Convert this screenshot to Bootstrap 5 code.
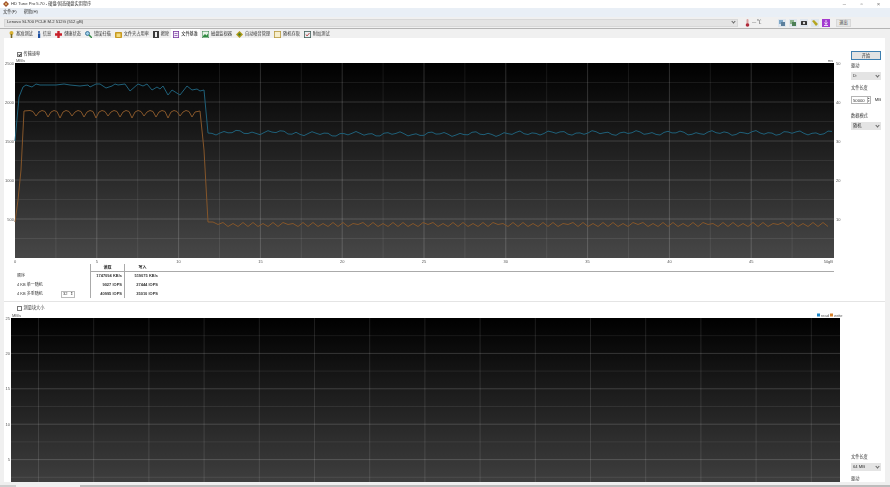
<!DOCTYPE html>
<html lang="zh-CN">
<head>
  <meta charset="UTF-8">
  <meta name="viewport" content="width=device-width, initial-scale=1">
  <title>HD Tune Pro 5.70</title>
  <link href="https://cdn.jsdelivr.net/npm/bootstrap@5.3.3/dist/css/bootstrap.min.css" rel="stylesheet">
  <style>
    html, body { height: 487px; overflow: hidden; }
    body { background: #f0f0f0; color: #333; font: 4.2px/1 "Liberation Sans", "Noto Sans CJK SC", sans-serif; filter: blur(.3px); }
    svg { display: block; }
    svg text { font: 4px "Liberation Sans", "Noto Sans CJK SC", sans-serif; fill: #555; }
    .title-bar { height: 8px; background: #fff; padding: 0 3px; gap: 2px; }
    .win-btn { width: 17px; text-align: center; color: #777; font-size: 6px; }
    .menu-bar { height: 9px; background: #e9eff6; padding-left: 3px; gap: 7px; }
    .drive-bar { height: 12px; background: #f0f0f0; border-bottom: 1.5px solid #b4b4b4; padding: 0 39px 0 4px; }
    .drive-box { width: 734px; height: 8px; background: #e4e4e4; border: 1px solid #d8d8d8; padding: 0 2px; }
    .drop-arrow { width: 3px; height: 3px; border-right: .6px solid #666; border-bottom: .6px solid #666; transform: rotate(45deg); margin-top: -2px; }
    .temp-read { margin-left: 7px; gap: 2px; width: 26px; }
    .tool-group { gap: 3px; }
    .tool-btn { width: 8px; height: 8px; background: #dfe6ee; display: flex; align-items: center; justify-content: center; }
    .exit-btn { width: 15px; height: 8px; background: #e6e6e6; border: 1px solid #d8d8d8; text-align: center; line-height: 6px; margin-left: 3px; }
    .tab-bar.nav { height: 9px; padding-left: 7px; gap: 0; border: 0; background: #f0f0f0; flex-wrap: nowrap; }
    .tab-bar .nav-link { padding: 1px 2px 0; gap: 2px; height: 9px; border: 0; border-radius: 0; color: #333; font-size: 4.2px; display: flex; align-items: center; background: none; }
    .tab-bar .nav-link.active { background: #fff; }
    .work-panel { height: 444px; width: 881px; margin-left: 4px; background: #fff; }
    .upper-pane { height: 264px; border-bottom: 1.5px solid #e4e4e4; }
    .lower-pane { height: 180px; }
    .chart-col { width: 842px; flex: none; }
    .side-col { width: 39px; flex: none; padding-left: 5px; padding-right: 4px; }
    .tick-row { height: 7px; padding-left: 13px; gap: 2px; }
    .tick-box { width: 4.5px; height: 4.5px; border: .6px solid #777; background: #fff; position: relative; }
    .tick-box.is-on::after { content: ""; position: absolute; left: .9px; top: .2px; width: 1.7px; height: 2.8px; border-right: .6px solid #333; border-bottom: .6px solid #333; transform: rotate(40deg); }
    .start-btn { width: 30px; height: 9px; background: #e3e3e3; border: 1px solid #3f7fb0; text-align: center; line-height: 7px; margin-top: 13px; }
    .field-label { height: 5px; margin-top: 4px; margin-bottom: 3px; }
    .field-box { width: 30px; height: 8px; background: #e4e4e4; padding: 0 2px; }
    .size-box { width: 18px; height: 8px; background: #fff; border: .6px solid #b5b5b5; padding-left: 1px; line-height: 7px; }
    .spin-box { width: 3px; height: 8px; border: .6px solid #b5b5b5; border-left: 0; font-size: 2.5px; line-height: 3.4px; text-align: center; }
    .result-grid { height: 35px; margin-left: 11px; width: 819px; display: grid; grid-template-columns: 75px 34px 36px 1fr; grid-template-rows: 8px 7px 11px 8px; font-weight: 700; font-size: 4px; }
    .result-grid > div { display: flex; align-items: center; }
    .result-head { border-bottom: 1.2px solid #aaa; }
    .bar-left { border-left: 1.2px solid #aaa; }
    .cell-num { justify-content: flex-end; padding-right: 2px; }
    .cell-name { font-weight: 400; padding-left: 2px; justify-content: space-between; padding-right: 15px; }
    .thread-box { width: 14px; height: 7px; border: .6px solid #bbb; display: flex; align-items: center; justify-content: space-between; padding: 0 1px; }
    .bottom-strip { height: 5px; background: #efefef; padding-top: 3px; }
    .strip-seg { height: 2px; }
    .strip-a { width: 16px; background: #cfcfcf; }
    .strip-b { width: 64px; background: #efefef; }
    .strip-c { flex-grow: 1; background: #bcbcbc; }
  </style>
</head>
<body>
  <div class="d-flex align-items-center title-bar">
    <svg width="6" height="6" viewBox="0 0 6 6"><path d="M3 0 6 3 3 6 0 3z" fill="#a0522d"/><circle cx="3" cy="3" r="1" fill="#e8c070"/></svg>
    <span>HD Tune Pro 5.70 - 硬盘/固态硬盘实用程序</span>
    <div class="ms-auto d-flex">
      <span class="win-btn">–</span><span class="win-btn">▫</span><span class="win-btn">×</span>
    </div>
  </div>
  <div class="d-flex align-items-center menu-bar"><span>文件(F)</span><span>帮助(H)</span></div>
  <div class="d-flex align-items-center drive-bar">
    <div class="d-flex align-items-center justify-content-between drive-box">
      <span>Lenovo SL700 PCI-E M.2 512G (512 gB)</span><span class="drop-arrow"></span>
    </div>
    <div class="d-flex align-items-center temp-read">
      <svg width="5" height="8" viewBox="0 0 5 8"><rect x="1.5" width="2" height="6" rx="1" fill="#d9a0a0"/><circle cx="2.5" cy="6" r="1.8" fill="#b02a3a"/></svg>
      <span>— ℃</span>
    </div>
    <div class="d-flex ms-auto tool-group align-items-center">
      <span class="tool-btn"><svg width="6" height="6" viewBox="0 0 6 6"><rect width="4" height="4" fill="#7fa8c8"/><rect x="2" y="2" width="4" height="4" fill="#5c7f9c"/></svg></span>
      <span class="tool-btn"><svg width="6" height="6" viewBox="0 0 6 6"><rect width="4" height="4" fill="#8fb58f"/><rect x="2" y="2" width="4" height="4" fill="#4d7f55"/></svg></span>
      <span class="tool-btn"><svg width="6" height="5" viewBox="0 0 6 5"><rect y="1" width="6" height="4" rx=".6" fill="#333"/><circle cx="3" cy="3" r="1.2" fill="#ddd"/></svg></span>
      <span class="tool-btn"><svg width="6" height="6" viewBox="0 0 6 6"><path d="M0 1 2 0 6 4 4 6z" fill="#b5a520"/></svg></span>
      <span class="tool-btn"><svg width="8" height="8" viewBox="0 0 8 8"><rect width="8" height="8" fill="#a23ad0"/><path d="M4 1v4M2.5 3.5 4 5.5 5.5 3.5M2 6.5h4" stroke="#fff" stroke-width=".8" fill="none"/></svg></span>
      <span class="exit-btn">退出</span>
    </div>
  </div>
  <ul class="nav nav-tabs tab-bar">
    <li class="nav-item"><a class="nav-link" href="#"><svg width="5" height="7" viewBox="0 0 5 7"><circle cx="2.5" cy="2" r="2" fill="#d8b030"/><rect x="1.7" y="3" width="1.6" height="4" fill="#7a6a20"/></svg>基准测试</a></li>
    <li class="nav-item"><a class="nav-link" href="#"><svg width="4" height="7" viewBox="0 0 4 7"><circle cx="2" cy="1" r="1" fill="#1c4fa0"/><rect x="1" y="2.4" width="2.2" height="4.6" fill="#1c4fa0"/></svg>信息</a></li>
    <li class="nav-item"><a class="nav-link" href="#"><svg width="7" height="7" viewBox="0 0 7 7"><path d="M2.3 0h2.4v2.3H7v2.4H4.700V7H2.300V4.700H0V2.300h2.300z" fill="#c8202a"/></svg>健康状态</a></li>
    <li class="nav-item"><a class="nav-link" href="#"><svg width="7" height="7" viewBox="0 0 7 7"><circle cx="2.500" cy="2.500" r="2" fill="#9fd0e8" stroke="#24608a" stroke-width=".8"/><path d="M4 4 7 7" stroke="#2e8a40" stroke-width="1.400"/></svg>错误扫描</a></li>
    <li class="nav-item"><a class="nav-link" href="#"><svg width="7" height="7" viewBox="0 0 7 7"><rect y="1" width="7" height="6" rx=".8" fill="#c89a20"/><rect x="1.500" y="2.500" width="4" height="3.500" fill="#f3dc80"/></svg>文件夹占用率</a></li>
    <li class="nav-item"><a class="nav-link" href="#"><svg width="6" height="7" viewBox="0 0 6 7"><rect width="6" height="7" fill="#3a3a3a"/><rect x="2" y="1" width="2" height="5" fill="#eee"/></svg>擦除</a></li>
    <li class="nav-item"><a class="nav-link active" href="#"><svg width="6" height="7" viewBox="0 0 6 7"><rect x=".4" y=".4" width="5.200" height="6.200" fill="#f5f0fa" stroke="#7a3aa0" stroke-width=".8"/><path d="M1.500 2.500h3M1.500 4.500h3" stroke="#7a3aa0" stroke-width=".7"/></svg>文件基准</a></li>
    <li class="nav-item"><a class="nav-link" href="#"><svg width="7" height="7" viewBox="0 0 7 7"><rect width="7" height="7" fill="#e6f2e6" stroke="#2e7a40"/><path d="M1 5 3 3 4.500 4.500 6 2.500V6H1z" fill="#2e8a40"/></svg>磁盘监视器</a></li>
    <li class="nav-item"><a class="nav-link" href="#"><svg width="7" height="7" viewBox="0 0 7 7"><path d="M3.500 0 7 3.500 3.500 7 0 3.500z" fill="#b09a18"/><circle cx="3.500" cy="3.500" r="1.200" fill="#3f7a30"/></svg>自动噪音管理</a></li>
    <li class="nav-item"><a class="nav-link" href="#"><svg width="7" height="7" viewBox="0 0 7 7"><rect x=".4" y=".4" width="6.200" height="6.200" fill="#f7eecb" stroke="#b89a40" stroke-width=".8"/></svg>随机存取</a></li>
    <li class="nav-item"><a class="nav-link" href="#"><svg width="7" height="7" viewBox="0 0 7 7"><rect x=".4" y=".4" width="6.200" height="6.200" fill="#e8eef0" stroke="#44605a" stroke-width=".8"/><path d="M2 3.500 3 5 5.500 2" stroke="#b02a2a" stroke-width=".8" fill="none"/></svg>附加测试</a></li>
  </ul>

  <div class="work-panel">
    <div class="d-flex upper-pane">
      <div class="chart-col">
        <div class="d-flex align-items-center tick-row" style="margin-top:13px"><span class="tick-box is-on"></span><span>传输速率</span></div>
        <svg id="speedChart" width="842" height="206" viewBox="4 58 842 206"></svg>
        <div class="result-grid">
          <div></div><div class="bar-left justify-content-center result-head">读取</div><div class="bar-left justify-content-center result-head">写入</div><div class="result-head"></div>
          <div class="cell-name">顺序</div><div class="bar-left cell-num">1747094 KB/s</div><div class="bar-left cell-num">519075 KB/s</div><div></div>
          <div class="cell-name">4 KB 单一随机</div><div class="bar-left cell-num">9027 IOPS</div><div class="bar-left cell-num">27444 IOPS</div><div></div>
          <div class="cell-name"><span>4 KB 多重随机</span><span class="thread-box"><span>32</span><span>⇕</span></span></div><div class="bar-left cell-num">40995 IOPS</div><div class="bar-left cell-num">35010 IOPS</div><div></div>
        </div>
      </div>
      <div class="side-col d-flex flex-column">
        <div class="start-btn">开始</div>
        <div class="field-label">驱动</div>
        <div class="d-flex align-items-center justify-content-between field-box"><span>D:</span><span class="drop-arrow"></span></div>
        <div class="field-label" style="margin-top:6px;margin-bottom:5px">文件长度</div>
        <div class="d-flex align-items-center">
          <span class="size-box">50000</span><span class="spin-box">▴<br>▾</span><span class="ms-1 text-nowrap">MB</span>
        </div>
        <div class="field-label" style="margin-top:10px">数据模式</div>
        <div class="d-flex align-items-center justify-content-between field-box"><span>随机</span><span class="drop-arrow"></span></div>
      </div>
    </div>
    <div class="d-flex lower-pane">
      <div class="chart-col">
        <div class="d-flex align-items-center tick-row" style="margin-top:3px"><span class="tick-box"></span><span>测量块大小</span></div>
        <svg id="blockChart" width="842" height="170" viewBox="4 312 842 170"></svg>
      </div>
      <div class="side-col d-flex flex-column justify-content-end">
        <div class="field-label">文件长度</div>
        <div class="d-flex align-items-center justify-content-between field-box"><span>64 MB</span><span class="drop-arrow"></span></div>
        <div class="field-label mb-0" style="margin-top:6px">驱动</div>
      </div>
    </div>
  </div>
  <div class="bottom-strip d-flex"><div class="strip-seg strip-a"></div><div class="strip-seg strip-b"></div><div class="strip-seg strip-c"></div></div>

  <script>
    // both svgs use window coordinates through their viewBox
    const line = (x1, y1, x2, y2, color) => `<line x1="${x1}" y1="${y1}" x2="${x2}" y2="${y2}" stroke="${color}"/>`;
    const label = (x, y, text, anchor = 'end') => `<text x="${x}" y="${y}" text-anchor="${anchor}">${text}</text>`;
    const poly = (pts, color) => `<polyline points="${pts.map(p => p.join(',')).join(' ')}" fill="none" stroke="${color}" stroke-width="1"/>`;
    const MAJOR = 'rgba(255,255,255,.17)';
    const MINOR = 'rgba(255,255,255,.08)';

    function drawSpeed() {
      const L = 15, R = 834, T = 63, B = 258;
      let s = `<defs><linearGradient id="g1" x1="0" y1="0" x2="0" y2="1"><stop offset="0" stop-color="#000"/><stop offset="1" stop-color="#474747"/></linearGradient></defs>`;
      s += `<rect x="${L}" y="${T}" width="${R - L}" height="${B - T}" fill="url(#g1)"/>`;
      for (let i = 1; i < 20; i++) {
        const x = L + i * 40.9;
        s += line(x, T, x, B, i % 2 ? MINOR : MAJOR);
      }
      for (let i = 1; i < 10; i++) {
        const y = T + i * 19.5;
        s += line(L, y, R, y, i % 2 ? MINOR : MAJOR);
      }
      const blue = [[15,141],[19,97],[23,87],[26,85],[29,86],[32,87],[36,84],[40,85],[48,85],[56,85],[64,84],[70,85],[80,86],[88,85],[90,87],[96,84],[100,84],[106,88],[112,86],[115,84],[118,85],[125,84],[130,91],[138,84],[143,86],[147,84],[152,90],[157,87],[160,89],[163,86],[168,95],[172,90],[180,95],[187,86],[192,90],[197,89],[200,91],[204,90],[208,133]];
      for (let x = 212, i = 0; x <= 832; x += 4, i++) {
        const drift = x < 300 ? 132.5 : x < 520 ? 134 : 133;
        blue.push([x, +(drift + 1.4 * Math.sin(i * 1.7) + 1.1 * Math.sin(i * 0.63 + 1)).toFixed(1)]);
      }
      const orange = [[15,222],[18,200],[21,170],[24,111]];
      // rounded tops with narrow troughs
      for (let x = 30, i = 0; x <= 190; x += 12, i++) {
        orange.push([x, 110.5], [x + 3, 111.5], [x + 6, 116 + (i % 3)], [x + 9, 112]);
      }
      orange.push([200,111],[204,150],[208,222],[213,222]);
      for (let x = 218, i = 0; x <= 832; x += 5, i++) {
        orange.push([x, +(i % 2 ? 222.5 + (i % 3 === 0 ? 1 : 0) : 226.5 - (i % 7 === 0 ? 2 : 0)).toFixed(1)]);
      }
      s += poly(blue, '#1f6079') + poly(orange, '#85562a');
      [2500, 2000, 1500, 1000, 500].forEach((v, i) => { s += label(L - 1, T + i * 39 + 1.5, v); });
      [50, 40, 30, 20, 10].forEach((v, i) => { s += label(R + 2, T + i * 39 + 1.5, v, 'start'); });
      for (let i = 0; i <= 10; i++) {
        s += label(L + i * 81.8, B + 5, i === 10 ? '50gB' : i * 5, i === 10 ? 'end' : 'middle');
      }
      s += label(L + 1, T - 1, 'MB/s', 'start') + label(R - 1, T - 1, 'ms');
      document.getElementById('speedChart').innerHTML = s;
    }

    function drawBlock() {
      const L = 11, R = 840, T = 318, B = 482;
      let s = `<defs><linearGradient id="g2" x1="0" y1="0" x2="0" y2="1"><stop offset="0" stop-color="#000"/><stop offset="1" stop-color="#3e3e3e"/></linearGradient></defs>`;
      s += `<rect x="${L}" y="${T}" width="${R - L}" height="${B - T}" fill="url(#g2)"/>`;
      for (let i = 0; i < 15; i++) {
        const x = 38.5 + i * 55.2;
        s += line(x, T, x, B, 'rgba(255,255,255,.11)');
      }
      for (let i = 1; i < 10; i++) {
        const y = T + i * 17.7;
        s += line(L, y, R, y, i % 2 ? MINOR : MAJOR);
      }
      [25, 20, 15, 10, 5].forEach((v, i) => { s += label(L - 1, T + i * 35.4 + 1.5, v); });
      s += label(L + 1, T - 1, 'MB/s', 'start');
      s += `<rect x="817" y="313.500" width="3" height="3" fill="#1c86c8"/>` + label(821, 316.500, 'read', 'start');
      s += `<rect x="830" y="313.500" width="3" height="3" fill="#d9822b"/>` + label(834, 316.500, 'write', 'start');
      document.getElementById('blockChart').innerHTML = s;
    }

    drawSpeed();
    drawBlock();
  </script>
</body>
</html>
